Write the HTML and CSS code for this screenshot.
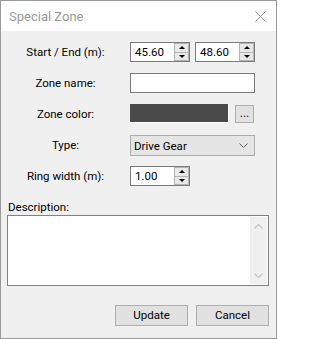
FILE: index.html
```html
<!DOCTYPE html>
<html>
<head>
<meta charset="utf-8">
<link rel="stylesheet" href="styles.css">
</head>
<body>
<div class="window">
  <div class="titlebar">
    <span class="title">Special Zone</span>
    <svg class="close" width="11" height="11" viewBox="0 0 11 11"><path d="M0.5 0.5 L10.5 10.5 M10.5 0.5 L0.5 10.5" stroke="#9a9a9a" stroke-width="1" fill="none"/></svg>
  </div>
  <div class="form">
    <div class="label">Start / End (m):</div>
    <div class="ctrl pair">
      <div class="spin"><span class="val">45.60</span><span class="btns"><span class="btn up"></span><span class="btn down"></span></span></div>
      <div class="spin"><span class="val">48.60</span><span class="btns"><span class="btn up"></span><span class="btn down"></span></span></div>
    </div>
    <div class="label">Zone name:</div>
    <div class="ctrl"><div class="textbox"></div></div>
    <div class="label">Zone color:</div>
    <div class="ctrl colorrow"><div class="swatch"></div><div class="dots">...</div></div>
    <div class="label">Type:</div>
    <div class="ctrl"><div class="combo"><span>Drive Gear</span><svg width="9" height="5" viewBox="0 0 9 5"><path d="M0.5 0.5 L4.5 4.5 L8.5 0.5" stroke="#606060" stroke-width="1" fill="none"/></svg></div></div>
    <div class="label">Ring width (m):</div>
    <div class="ctrl"><div class="spin"><span class="val">1.00</span><span class="btns"><span class="btn up"></span><span class="btn down"></span></span></div></div>
  </div>
  <div class="desc-label">Description:</div>
  <div class="textarea">
    <div class="scroll">
      <svg width="9" height="5" viewBox="0 0 9 5"><path d="M0.5 4.5 L4.5 0.5 L8.5 4.5" stroke="#c4c4c4" stroke-width="1.2" fill="none"/></svg>
      <svg width="9" height="5" viewBox="0 0 9 5"><path d="M0.5 0.5 L4.5 4.5 L8.5 0.5" stroke="#c4c4c4" stroke-width="1.2" fill="none"/></svg>
    </div>
  </div>
  <div class="buttons">
    <div class="button">Update</div>
    <div class="button">Cancel</div>
  </div>
</div>
</body>
</html>
```
FILE: styles.css
```css
html, body {
  margin: 0;
  padding: 0;
  background: #ffffff;
}
.window {
  width: 277px;
  height: 339px;
  box-sizing: border-box;
  border: 1px solid #9a9a9a;
  background: #f0f0f0;
  display: flex;
  flex-direction: column;
  font-family: Roboto, "Liberation Sans", sans-serif;
  font-size: 11.5px;
  color: #000;
}
.titlebar {
  height: 30px;
  flex: none;
  background: #ffffff;
  display: flex;
  align-items: center;
  justify-content: space-between;
  padding: 0 10px 0 8px;
}
.title {
  font-size: 13px;
  color: #9a9a9a;
}
.close {
  display: block;
}
.form {
  margin-top: 11px;
  display: grid;
  grid-template-columns: 129px 1fr;
  grid-auto-rows: 31px;
}
.label {
  text-align: center;
  height: 20px;
  line-height: 20px;
}
.ctrl {
  display: flex;
  align-items: flex-start;
}
.pair {
  gap: 5px;
}
.spin {
  width: 60px;
  height: 20px;
  box-sizing: border-box;
  border: 1px solid #7a7a7a;
  background: #fff;
  display: flex;
}
.val {
  flex: 1;
  padding-left: 4px;
  line-height: 18px;
}
.btns {
  width: 15px;
  display: flex;
  flex-direction: column;
  border: 1px solid #b4b4b4;
  box-sizing: border-box;
}
.btn {
  flex: 1;
  background: #e8e8e8;
  display: flex;
  align-items: center;
  justify-content: center;
}
.btn.up {
  border-bottom: 1px solid #b4b4b4;
}
.btn.up::before {
  content: "";
  border-left: 3px solid transparent;
  border-right: 3px solid transparent;
  border-bottom: 3px solid #000;
}
.btn.down::before {
  content: "";
  border-left: 3px solid transparent;
  border-right: 3px solid transparent;
  border-top: 3px solid #000;
}
.textbox {
  width: 125px;
  height: 20px;
  box-sizing: border-box;
  border: 1px solid #7a7a7a;
  background: #fff;
}
.colorrow {
  gap: 6px;
}
.swatch {
  width: 99px;
  height: 19px;
  box-sizing: border-box;
  background: #4b4b4b;
  border-right: 1px solid #ffffff;
  border-bottom: 1px solid #ffffff;
}
.dots {
  margin-top: 1px;
  width: 19px;
  height: 18px;
  box-sizing: border-box;
  border: 1px solid #adadad;
  background: #e1e1e1;
  text-align: center;
  line-height: 14px;
  font-size: 12px;
  color: #202040;
}
.combo {
  width: 125px;
  height: 21px;
  box-sizing: border-box;
  border: 1px solid #acacac;
  background: #e5e5e5;
  display: flex;
  align-items: center;
  justify-content: space-between;
  padding: 0 6px 0 3px;
}
.combo svg {
  display: block;
}
.desc-label {
  height: 16px;
  line-height: 16px;
  margin-top: 2px;
  padding-left: 7px;
}
.textarea {
  margin: 0 7px 0 6px;
  height: 71px;
  box-sizing: border-box;
  border: 1px solid #828282;
  background: #fff;
  display: flex;
  justify-content: flex-end;
  padding: 1px;
}
.scroll {
  width: 17px;
  background: #f0f0f0;
  display: flex;
  flex-direction: column;
  justify-content: space-between;
  align-items: center;
  padding: 7px 0 6px;
  box-sizing: border-box;
}
.scroll svg {
  display: block;
}
.buttons {
  margin-top: 19px;
  display: flex;
  justify-content: flex-end;
  gap: 8px;
  padding-right: 7px;
}
.button {
  width: 73px;
  height: 21px;
  box-sizing: border-box;
  border: 1px solid #adadad;
  background: #e1e1e1;
  text-align: center;
  line-height: 19px;
}
```
